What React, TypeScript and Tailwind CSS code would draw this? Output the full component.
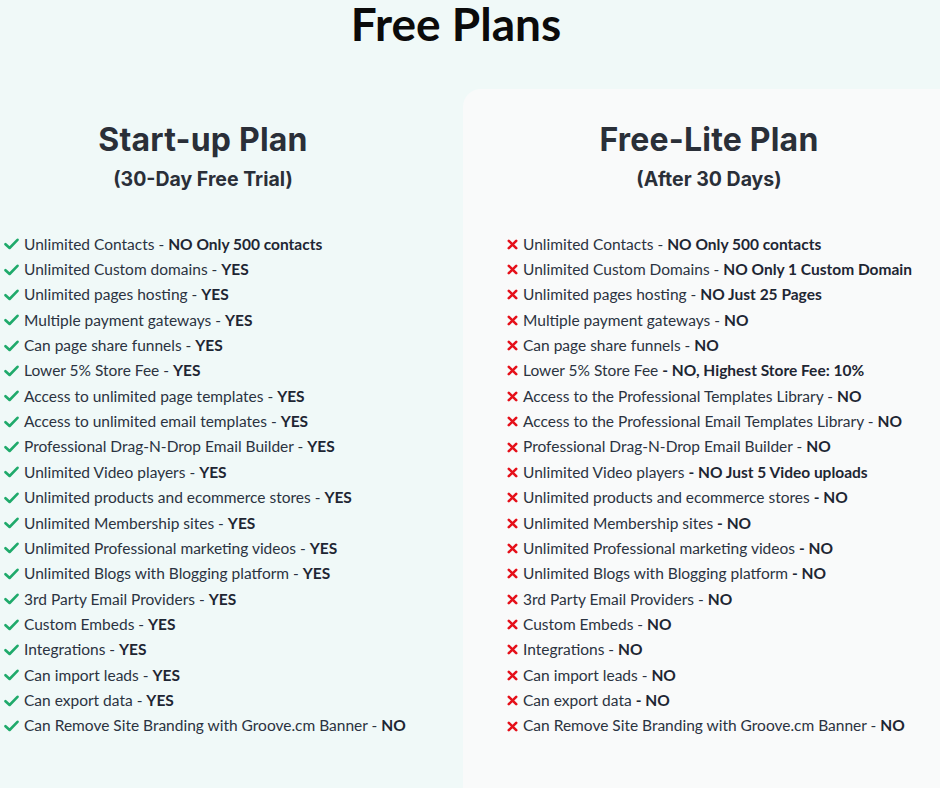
const startup: [string, string][] = [
  ['Unlimited Contacts - ', 'NO Only 500 contacts'],
  ['Unlimited Custom domains - ', 'YES'],
  ['Unlimited pages hosting - ', 'YES'],
  ['Multiple payment gateways - ', 'YES'],
  ['Can page share funnels - ', 'YES'],
  ['Lower 5% Store Fee - ', 'YES'],
  ['Access to unlimited page templates - ', 'YES'],
  ['Access to unlimited email templates - ', 'YES'],
  ['Professional Drag-N-Drop Email Builder - ', 'YES'],
  ['Unlimited Video players - ', 'YES'],
  ['Unlimited products and ecommerce stores - ', 'YES'],
  ['Unlimited Membership sites - ', 'YES'],
  ['Unlimited Professional marketing videos - ', 'YES'],
  ['Unlimited Blogs with Blogging platform - ', 'YES'],
  ['3rd Party Email Providers - ', 'YES'],
  ['Custom Embeds - ', 'YES'],
  ['Integrations - ', 'YES'],
  ['Can import leads - ', 'YES'],
  ['Can export data - ', 'YES'],
  ['Can Remove Site Branding with Groove.cm Banner - ', 'NO'],
];

const freeLite: [string, string][] = [
  ['Unlimited Contacts - ', 'NO Only 500 contacts'],
  ['Unlimited Custom Domains - ', 'NO Only 1 Custom Domain'],
  ['Unlimited pages hosting - ', 'NO Just 25 Pages'],
  ['Multiple payment gateways - ', 'NO'],
  ['Can page share funnels - ', 'NO'],
  ['Lower 5% Store Fee ', '- NO, Highest Store Fee: 10%'],
  ['Access to the Professional Templates Library - ', 'NO'],
  ['Access to the Professional Email Templates Library - ', 'NO'],
  ['Professional Drag-N-Drop Email Builder - ', 'NO'],
  ['Unlimited Video players ', '- NO Just 5 Video uploads'],
  ['Unlimited products and ecommerce stores ', '- NO'],
  ['Unlimited Membership sites ', '- NO'],
  ['Unlimited Professional marketing videos ', '- NO'],
  ['Unlimited Blogs with Blogging platform ', '- NO'],
  ['3rd Party Email Providers - ', 'NO'],
  ['Custom Embeds - ', 'NO'],
  ['Integrations - ', 'NO'],
  ['Can import leads - ', 'NO'],
  ['Can export data ', '- NO'],
  ['Can Remove Site Branding with Groove.cm Banner - ', 'NO'],
];

const Check = () => (
  <svg width="15" height="12" viewBox="0 0 15 12" className="shrink-0">
    <path d="M1.5 6.2 L5.6 10 L13.5 1.8" fill="none" stroke="#1faa6b" strokeWidth="2.6" strokeLinecap="round" strokeLinejoin="round" />
  </svg>
);

const Cross = () => (
  <svg width="11" height="11" viewBox="0 0 11 11" className="shrink-0">
    <path d="M1.8 1.8 L9.2 9.2 M9.2 1.8 L1.8 9.2" fill="none" stroke="#e5101a" strokeWidth="2.6" strokeLinecap="round" />
  </svg>
);

const FeatureList = ({ items, ok }: { items: [string, string][]; ok: boolean }) => (
  <ul className="flex flex-col">
    {items.map(([label, value], i) => (
      <li key={i} className="flex items-center h-[25.37px] text-[15.5px] text-[#2b3341]">
        <span className={ok ? 'w-[24px] flex justify-start pl-[4px]' : 'w-[16px] flex justify-start'}>
          {ok ? <Check /> : <Cross />}
        </span>
        <span className="whitespace-nowrap">
          {label}
          <b className="font-bold text-[#1e2633]">{value}</b>
        </span>
      </li>
    ))}
  </ul>
);

const PlanHeading = ({ title, sub }: { title: string; sub: string }) => (
  <div className="flex flex-col items-center font-['Inter',sans-serif] text-[#2a2f38] font-bold">
    <h2 className="text-[32px] leading-none tracking-[0.2px]">{title}</h2>
    <p className="mt-[14px] text-[19.5px] leading-none">{sub}</p>
  </div>
);

export default function App() {
  return (
    <div className="w-[940px] h-[788px] overflow-hidden bg-[#f0f9f8] font-['Lato',sans-serif]">
      <h1 className="pr-[28px] text-center text-[46px] leading-[48px] font-bold text-[#0b0b0b]">Free Plans</h1>
      <div className="flex mt-[41px]">
        <div className="w-[463px] shrink-0">
          <div className="w-[406px] pt-[35px]">
            <PlanHeading title="Start-up Plan" sub="(30-Day Free Trial)" />
          </div>
          <div className="mt-[42px]">
            <FeatureList items={startup} ok />
          </div>
        </div>
        <div className="flex-1 h-[720px] bg-[#f9fafa] rounded-tl-[18px]">
          <div className="pt-[35px] pl-[15px]">
            <PlanHeading title="Free-Lite Plan" sub="(After 30 Days)" />
          </div>
          <div className="mt-[42px] pl-[44px]">
            <FeatureList items={freeLite} ok={false} />
          </div>
        </div>
      </div>
    </div>
  );
}
